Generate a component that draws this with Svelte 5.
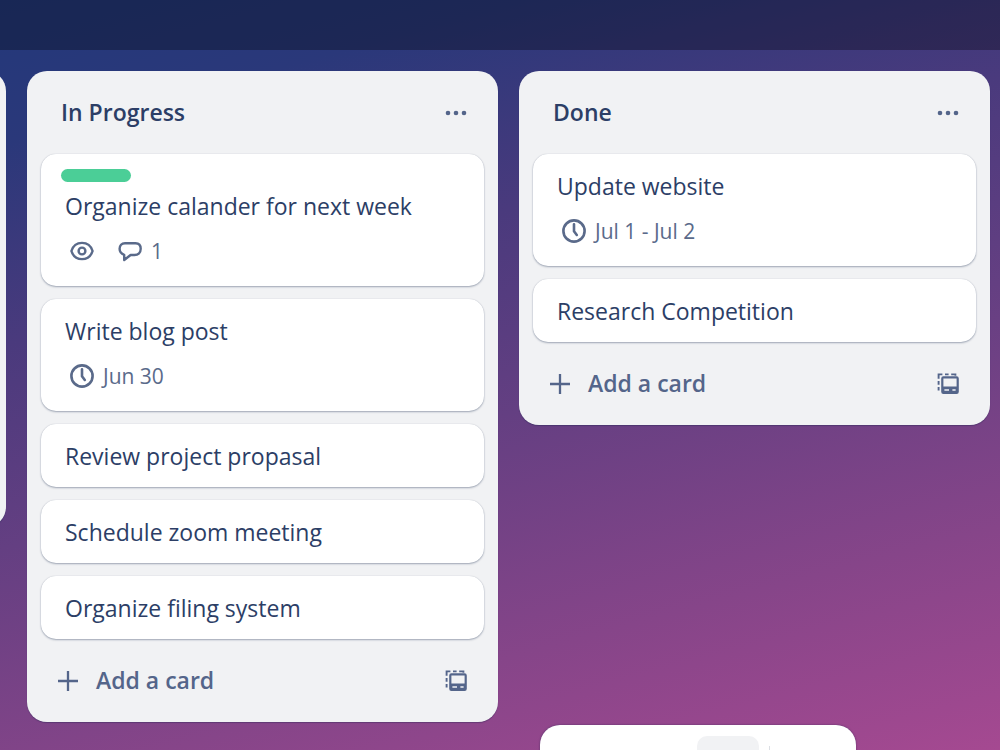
<script>
  const lists = [
    {
      title: 'In Progress',
      cards: [
        { title: 'Organize calander for next week', label: true, watching: true, comments: 1 },
        { title: 'Write blog post', due: 'Jun 30' },
        { title: 'Review project propasal' },
        { title: 'Schedule zoom meeting' },
        { title: 'Organize filing system' }
      ]
    },
    {
      title: 'Done',
      cards: [
        { title: 'Update website', due: 'Jul 1 - Jul 2' },
        { title: 'Research Competition' }
      ]
    }
  ];
</script>

<div class="app">
  <header class="board-header"></header>

  <main class="board">
    <div class="peek">
      <section class="list previous"></section>
    </div>

    {#each lists as list}
      <section class="list">
        <div class="list-header">
          <h2>{list.title}</h2>
          <button class="icon-button" aria-label="List actions">
            <svg width="22" height="22" viewBox="0 0 22 22" fill="currentColor">
              <circle cx="3" cy="11" r="2.3" />
              <circle cx="11" cy="11" r="2.3" />
              <circle cx="19" cy="11" r="2.3" />
            </svg>
          </button>
        </div>

        <div class="cards">
          {#each list.cards as card}
            <article class="card">
              {#if card.label}
                <div class="label"></div>
              {/if}
              <h3>{card.title}</h3>
              {#if card.due || card.watching || card.comments}
                <div class="badges">
                  {#if card.watching}
                    <span class="badge">
                      <svg width="24" height="24" viewBox="0 0 24 24" fill="none" stroke="currentColor" stroke-width="2.4">
                        <path d="M1.4 12C3.2 6.4 7.4 3.9 12 3.9S20.8 6.4 22.6 12C20.8 17.6 16.6 20.1 12 20.1S3.2 17.6 1.4 12Z" stroke-linejoin="round" />
                        <circle cx="12" cy="12" r="3.4" />
                      </svg>
                    </span>
                  {/if}
                  {#if card.comments}
                    <span class="badge">
                      <svg width="24" height="24" viewBox="0 0 24 24" fill="none" stroke="currentColor" stroke-width="2.4" stroke-linejoin="round">
                        <path d="M7 4.2H17.5C20.8 4.2 22.7 6.4 22.7 9.8C22.7 13.6 20.2 16 16.5 16H12.6L6.2 21V15.8C3.2 14.8 1.6 12.8 1.6 9.8C1.6 6.4 3.6 4.2 7 4.2Z" />
                      </svg>
                      {card.comments}
                    </span>
                  {/if}
                  {#if card.due}
                    <span class="badge">
                      <svg width="24" height="24" viewBox="0 0 24 24" fill="none" stroke="currentColor" stroke-width="2.6">
                        <circle cx="12" cy="12" r="10.6" />
                        <path d="M12 5.2V12.2L14.8 16" stroke-linecap="round" stroke-linejoin="round" />
                      </svg>
                      {card.due}
                    </span>
                  {/if}
                </div>
              {/if}
            </article>
          {/each}
        </div>

        <div class="list-footer">
          <button class="add-card">
            <svg width="20" height="20" viewBox="0 0 20 20" fill="none" stroke="currentColor" stroke-width="2.3">
              <path d="M10 0V20M0 10H20" />
            </svg>
            Add a card
          </button>
          <button class="icon-button" aria-label="Create from template">
            <svg width="22" height="22" viewBox="0 0 22 22">
              <path d="M1.6 17.6V14M1.6 11.8V8M1.6 5.8V1.4H5.4M8 1.4H11.6M14.2 1.4H18.4V2.8" fill="none" stroke="currentColor" stroke-width="1.9" />
              <path d="M6.4 3.2H19.6Q21.8 3.2 21.8 5.4V18.8Q21.8 21 19.6 21H6.4Q4.2 21 4.2 18.8V5.4Q4.2 3.2 6.4 3.2ZM6.4 5.4V13.6H19.6V5.4ZM7.4 16.2V17.8H12V16.2ZM15.4 16.2V17.8H18.6V16.2Z" fill="currentColor" fill-rule="evenodd" />
            </svg>
          </button>
        </div>
      </section>
    {/each}
  </main>

  <nav class="dock">
    <button class="dock-tab" aria-label="Board"></button>
    <span class="divider"></span>
  </nav>
</div>

<style>
  :global(body) {
    margin: 0;
  }

  .app {
    min-height: 100vh;
    background: linear-gradient(165deg, #23387a 0%, #2a387a 14%, #4a3a7d 34%, #643f82 54%, #864589 78%, #a54991 100%);
    font-family: "Segoe UI", "Open Sans", "Noto Sans", sans-serif;
    color: #2c3e66;
    overflow: hidden;
  }

  .board-header {
    height: 50px;
    background: rgba(0, 0, 0, 0.3);
  }

  .board {
    display: grid;
    grid-template-columns: 6px 1fr 1fr;
    align-items: start;
    gap: 21px;
    padding: 21px 10px 28px 0;
  }

  .peek {
    display: flex;
    justify-content: flex-end;
    overflow: hidden;
  }

  .list {
    box-sizing: border-box;
    padding: 0 14px;
    background: #f1f2f4;
    border-radius: 20px;
    box-shadow: 0 1px 1px rgba(9, 30, 66, 0.3);
  }

  .list.previous {
    flex: none;
    width: 200px;
    height: 456px;
  }

  .list-header,
  .list-footer {
    display: flex;
    align-items: center;
    justify-content: space-between;
    height: 83px;
    padding: 0 17px 0 20px;
  }

  .list-footer {
    padding-left: 17px;
  }

  h2,
  h3 {
    margin: 0;
    line-height: 35px;
  }

  h2 {
    font-size: 23px;
    font-weight: 600;
  }

  h3 {
    padding: 0 4px;
    font-size: 23px;
    font-weight: 400;
  }

  button {
    border: none;
    background: none;
    padding: 0;
    font: inherit;
    color: #54658a;
    cursor: pointer;
  }

  svg {
    display: block;
    flex: none;
  }

  .cards {
    display: flex;
    flex-direction: column;
    gap: 13px;
  }

  .card {
    padding: 15px 20px 13px;
    background: #fff;
    border-radius: 15px;
    box-shadow: 0 1px 2px rgba(9, 30, 66, 0.35), 0 0 1px rgba(9, 30, 66, 0.2);
  }

  .label {
    width: 70px;
    height: 13px;
    margin-bottom: 7px;
    border-radius: 7px;
    background: #4bce97;
  }

  .badges {
    display: flex;
    align-items: center;
    gap: 24px;
    height: 42px;
    margin-top: 6px;
    padding: 0 0 1px 9px;
    font-size: 21px;
    color: #5a6a8a;
  }

  .badge {
    display: flex;
    align-items: center;
    gap: 9px;
  }

  .add-card {
    display: flex;
    align-items: center;
    gap: 18px;
    font-size: 23px;
    font-weight: 600;
    line-height: 35px;
  }

  .dock {
    position: fixed;
    left: 54%;
    bottom: -43px;
    display: flex;
    align-items: flex-start;
    justify-content: flex-end;
    gap: 10px;
    box-sizing: border-box;
    width: 316px;
    height: 68px;
    padding: 11px 86px 12px 0;
    background: #fff;
    border-radius: 20px;
    box-shadow: 0 0 2px rgba(9, 30, 66, 0.5);
  }

  .dock-tab {
    width: 62px;
    height: 44px;
    border-radius: 10px;
    background: #f1f2f4;
  }

  .divider {
    width: 1px;
    height: 34px;
    margin-top: 10px;
    background: #dcdfe4;
  }
</style>
